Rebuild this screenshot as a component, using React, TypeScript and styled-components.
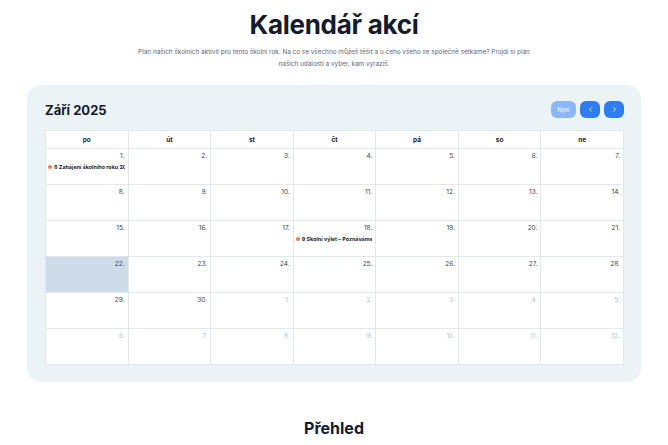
import React from 'react'
import styled, { createGlobalStyle } from 'styled-components'

const GlobalStyle = createGlobalStyle`
  html, body {
    margin: 0;
    padding: 0;
    background: #ffffff;
  }
  body {
    font-family: Inter, "Noto Sans", "Liberation Sans", sans-serif;
    color: #171b2c;
  }
`

type Day = {
  n: number
  muted?: boolean
  today?: boolean
  event?: { time: string; title: string }
}

const weekdays = ['po', 'út', 'st', 'čt', 'pá', 'so', 'ne']

const buildDays = (): Day[] => {
  const days: Day[] = []
  for (let i = 1; i <= 30; i++) {
    days.push({ n: i, today: i === 22 })
  }
  for (let i = 1; i <= 12; i++) {
    days.push({ n: i, muted: true })
  }
  days[0].event = { time: '8', title: 'Zahájení školního roku 2025' }
  days[17].event = { time: '9', title: 'Školní výlet – Poznáváme okolí' }
  return days
}

const ChevronLeft = () => (
  <svg width="7" height="7" viewBox="0 0 24 24" fill="none" stroke="#fff" strokeWidth="3" strokeLinecap="round" strokeLinejoin="round">
    <path d="M15 18l-6-6 6-6" />
  </svg>
)

const ChevronRight = () => (
  <svg width="7" height="7" viewBox="0 0 24 24" fill="none" stroke="#fff" strokeWidth="3" strokeLinecap="round" strokeLinejoin="round">
    <path d="M9 18l6-6-6-6" />
  </svg>
)

const App = () => {
  const days = buildDays()

  return (
    <Page>
      <GlobalStyle />
      <Intro>
        <Title>Kalendář akcí</Title>
        <Lead>
          Plán našich školních aktivit pro tento školní rok. Na co se všechno můžeš těšit a u čeho
          všeho se společně setkáme? Projdi si plán našich událostí a vyber, kam vyrazíš.
        </Lead>
      </Intro>

      <Card>
        <CardHeader>
          <Month>Září 2025</Month>
          <Controls>
            <NavButton disabled faded>Nyní</NavButton>
            <NavButton square><ChevronLeft /></NavButton>
            <NavButton square><ChevronRight /></NavButton>
          </Controls>
        </CardHeader>

        <Grid>
          {weekdays.map(d => (
            <HeadCell key={d}>{d}</HeadCell>
          ))}
          {days.map((d, i) => (
            <DayCell key={i} today={d.today}>
              <DayNumber muted={d.muted}>{d.n}.</DayNumber>
              {d.event && (
                <Event>
                  <Dot />
                  <EventText>
                    {d.event.time} {d.event.title}
                  </EventText>
                </Event>
              )}
            </DayCell>
          ))}
        </Grid>
      </Card>

      <Overview>Přehled</Overview>
    </Page>
  )
}

const Page = styled.div`
  width: 668px;
  display: flex;
  flex-direction: column;
  align-items: center;
`

const Intro = styled.div`
  display: flex;
  flex-direction: column;
  align-items: center;
  padding-top: 9px;
`

const Title = styled.h1`
  margin: 0;
  font-size: 26px;
  line-height: 32px;
  font-weight: 700;
  letter-spacing: -0.3px;
  color: #151a2c;
`

const Lead = styled.p`
  margin: 5px 0 0;
  width: 410px;
  text-align: center;
  font-size: 6.4px;
  line-height: 12px;
  color: #5f6679;
`

const Card = styled.section`
  box-sizing: border-box;
  width: 614px;
  margin-top: 15px;
  padding: 16px 17px 17px 18px;
  background: #ebf3f7;
  border-radius: 14px;
`

const CardHeader = styled.div`
  display: flex;
  align-items: center;
  justify-content: space-between;
  height: 17px;
  margin-bottom: 12px;
`

const Month = styled.h2`
  margin: 0;
  font-size: 13px;
  font-weight: 700;
  color: #151a2c;
`

const Controls = styled.div`
  display: flex;
  gap: 4px;
`

const NavButton = styled.button<{ faded?: boolean; square?: boolean }>`
  display: flex;
  align-items: center;
  justify-content: center;
  height: 17px;
  width: ${p => (p.square ? '20px' : '25px')};
  padding: 0;
  border: none;
  border-radius: 6px;
  font-family: inherit;
  font-size: 5.5px;
  color: #ffffff;
  background: ${p => (p.faded ? '#8cb7f6' : '#2f7df0')};
`

const Grid = styled.div`
  display: grid;
  grid-template-columns: repeat(7, 1fr);
  grid-template-rows: 18px repeat(6, 36px);
  background: #ffffff;
  border-left: 1px solid #e3e8ec;
  border-top: 1px solid #e3e8ec;
`

const HeadCell = styled.div`
  display: flex;
  align-items: center;
  justify-content: center;
  font-size: 6.5px;
  font-weight: 700;
  color: #1c2030;
  border-right: 1px solid #e3e8ec;
  border-bottom: 1px solid #e3e8ec;
`

const DayCell = styled.div<{ today?: boolean }>`
  display: flex;
  flex-direction: column;
  min-width: 0;
  padding: 3px 3px 0 2px;
  background: ${p => (p.today ? '#cddce8' : 'transparent')};
  border-right: 1px solid #e3e8ec;
  border-bottom: 1px solid #e3e8ec;
`

const DayNumber = styled.span<{ muted?: boolean }>`
  align-self: flex-end;
  font-size: 6.5px;
  line-height: 9px;
  color: ${p => (p.muted ? '#b9bec6' : '#3a3f4d')};
`

const Event = styled.div`
  display: flex;
  align-items: center;
  gap: 2px;
  margin-top: 3px;
  overflow: hidden;
  white-space: nowrap;
`

const Dot = styled.span`
  flex: none;
  width: 4px;
  height: 4px;
  border-radius: 50%;
  background: #ef7a3d;
`

const EventText = styled.span`
  font-size: 5.4px;
  font-weight: 700;
  color: #1b1f2e;
`

const Overview = styled.h2`
  margin: 36px 0 0;
  font-size: 16px;
  font-weight: 700;
  color: #151a2c;
`

export default App
